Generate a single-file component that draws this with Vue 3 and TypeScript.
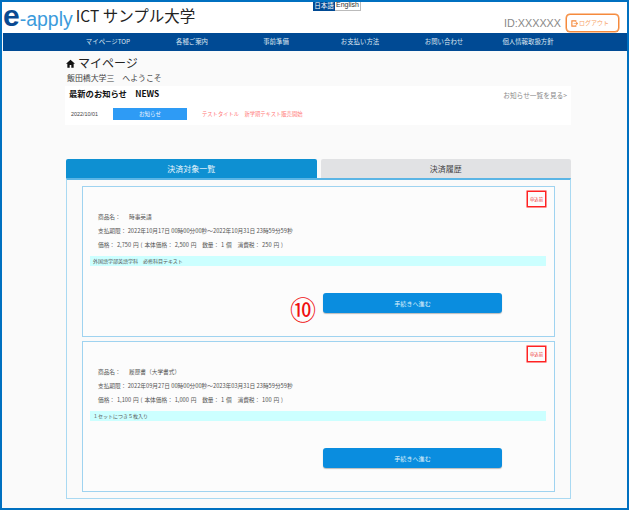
<script setup lang="ts">
interface Item {
  name: string
  period: string
  price: string
  note: string
  mark?: string
}
const navItems: string[] = ['マイページTOP', '各種ご案内', '事前準備', 'お支払い方法', 'お問い合わせ', '個人情報取扱方針']
const items: Item[] = [
  {
    name: '時事英語',
    period: '2022年10月17日 00時00分00秒～2022年10月31日 23時59分59秒',
    price: '2,750 円 ( 本体価格： 2,500 円　数量： 1 個　消費税： 250 円 )',
    note: '外国語学部英語学科　必修科目テキスト',
    mark: '⑩'
  },
  {
    name: '履歴書（大学書式）',
    period: '2022年09月27日 00時00分00秒～2023年03月31日 23時59分59秒',
    price: '1,100 円 ( 本体価格： 1,000 円　数量： 1 個　消費税： 100 円 )',
    note: '１セットにつき５枚入り'
  }
]
</script>

<template>
  <div class="frame">
    <header class="header">
      <div class="brand">
        <span class="logo"><span class="logo-e">e</span><span class="logo-rest">-apply</span></span>
        <span class="school">ICT サンプル大学</span>
      </div>
      <div class="lang">
        <span class="lang-ja">日本語</span>
        <span class="lang-en">English</span>
      </div>
      <div class="account">
        <span class="userid">ID:XXXXXX</span>
        <button class="logout">
          <svg width="7" height="7" viewBox="0 0 8 8">
            <path d="M5.5 2V1H1v6h4.5V6" fill="none" stroke="#f58a3c" stroke-width="1.3" />
            <path d="M3 4h3V2.6L8 4 6 5.4V4" fill="#f58a3c" stroke="#f58a3c" stroke-width=".6" />
          </svg>
          ログアウト
        </button>
      </div>
    </header>

    <nav class="nav">
      <div class="nav-inner">
        <a v-for="n in navItems" :key="n" class="nav-item">{{ n }}</a>
      </div>
    </nav>

    <main class="content">
      <h1 class="title">
        <svg width="9" height="9" viewBox="0 0 10 10">
          <path d="M5 .8 0 5.4h1.5V9.6h2.6V6.6h1.8v3h2.6V5.4H10Z" fill="#111" />
        </svg>
        マイページ
      </h1>
      <p class="welcome">飯田橋大学三　へようこそ</p>

      <section class="news">
        <div class="news-head">
          <h2>最新のお知らせ　NEWS</h2>
          <a class="news-more">お知らせ一覧を見る&gt;</a>
        </div>
        <div class="news-row">
          <span class="news-date">2022/10/01</span>
          <span class="news-tag">お知らせ</span>
          <span class="news-text">テストタイトル　新学期テキスト販売開始</span>
        </div>
      </section>

      <div class="tabs">
        <div class="tab active">決済対象一覧</div>
        <div class="tab">決済履歴</div>
      </div>

      <section class="panel">
        <article v-for="it in items" :key="it.name" class="card">
          <span class="badge">申込前</span>
          <p class="line"><span class="label">商品名：</span>{{ it.name }}</p>
          <p class="line">支払期限：&nbsp;{{ it.period }}</p>
          <p class="line price">価格：&nbsp;{{ it.price }}</p>
          <p class="note">{{ it.note }}</p>
          <div class="action">
            <span v-if="it.mark" class="mark">{{ it.mark }}</span>
            <button class="go">手続きへ進む</button>
          </div>
        </article>
      </section>
    </main>
  </div>
</template>

<style>
html, body { margin: 0; padding: 0; }
</style>

<style scoped>
.frame {
  box-sizing: border-box;
  width: 629px;
  height: 510px;
  overflow: hidden;
  border: 2px solid #0070c0;
  background: #fafafa;
  font-family: "Noto Sans CJK JP", "Liberation Sans", sans-serif;
  color: #333;
}
.header {
  position: relative;
  display: flex;
  justify-content: space-between;
  align-items: flex-start;
  height: 31px;
  background: #fff;
}
.brand {
  display: flex;
  align-items: flex-start;
  margin: 0 0 0 1px;
}
.logo {
  font-family: "Liberation Sans", sans-serif;
  line-height: 28px;
  white-space: nowrap;
}
.logo-e {
  color: #0a4a92;
  font-size: 30px;
  font-weight: 700;
}
.logo-rest {
  color: #3c9bdc;
  font-size: 19.5px;
}
.school {
  margin-left: 3px;
  font-size: 15.5px;
  line-height: 27px;
  color: #222;
  white-space: nowrap;
}
.lang {
  position: absolute;
  left: 311px;
  top: -2px;
  display: flex;
  line-height: 10px;
}
.lang-ja {
  width: 22px;
  background: #004a94;
  color: #fff;
  font-size: 6.5px;
  text-align: center;
}
.lang-en {
  width: 25px;
  background: #fff;
  color: #333;
  border-right: 1px solid #bbb;
  border-bottom: 1px solid #bbb;
  font-family: "Liberation Sans", sans-serif;
  font-size: 7px;
  text-align: center;
}
.account {
  display: flex;
  align-items: center;
  gap: 5px;
  margin: 12px 8px 0 0;
}
.userid {
  font-family: "Liberation Sans", sans-serif;
  font-size: 10.8px;
  color: #888;
}
.logout {
  display: flex;
  align-items: center;
  gap: 1px;
  box-sizing: border-box;
  width: 53px;
  height: 18px;
  padding: 0 0 0 4px;
  background: #fff;
  border: 1px solid #f58a3c;
  border-radius: 4px;
  box-shadow: 0 0 0 .5px #f58a3c;
  color: #f7a468;
  font-family: inherit;
  font-size: 6px;
  line-height: 1;
}
.nav {
  height: 18px;
  margin-left: 1px;
  background: #004a94;
}
.nav-inner {
  display: grid;
  grid-template-columns: repeat(6, 84px);
  width: 504px;
  margin-left: 63px;
}
.nav-item {
  color: #dde6f0;
  font-size: 6.4px;
  line-height: 18px;
  text-align: center;
  white-space: nowrap;
}
.content {
  width: 506px;
  margin-left: 63px;
}
.title {
  display: flex;
  align-items: center;
  gap: 3px;
  margin: 5px 0 0 1px;
  font-size: 12px;
  font-weight: 400;
  line-height: 14px;
  color: #222;
}
.welcome {
  margin: 2px 0 0 2px;
  font-size: 7.9px;
  line-height: 11px;
  color: #444;
}
.news {
  box-sizing: border-box;
  height: 39px;
  margin-top: 3px;
  padding: 0 4px;
  background: #fff;
}
.news-head {
  display: flex;
  justify-content: space-between;
  align-items: flex-start;
  height: 14px;
}
.news-head h2 {
  margin: 0;
  font-size: 8.3px;
  font-weight: 700;
  line-height: 14px;
  color: #111;
}
.news-more {
  margin-top: 3px;
  font-size: 6.7px;
  line-height: 12px;
  color: #888;
}
.news-row {
  display: flex;
  align-items: center;
  margin-top: 8px;
}
.news-date {
  width: 42px;
  margin-left: 2px;
  font-size: 5.4px;
  font-family: "Liberation Sans", sans-serif;
  color: #444;
}
.news-tag {
  width: 74px;
  height: 12px;
  background: #2e9bf5;
  color: #f2f8ff;
  font-size: 5.5px;
  line-height: 12px;
  text-align: center;
}
.news-text {
  margin-left: 15px;
  font-size: 5.3px;
  color: #f77;
}
.tabs {
  display: flex;
  gap: 4px;
  margin: 34px 0 0 1px;
  width: 505px;
}
.tab {
  flex: 1;
  height: 19px;
  border-radius: 2px 2px 0 0;
  background: #e1e2e4;
  color: #444;
  font-size: 8px;
  line-height: 19px;
  text-align: center;
}
.tab.active {
  background: #0e90d2;
  color: #e8f5fc;
}
.panel {
  box-sizing: border-box;
  display: flex;
  flex-direction: column;
  gap: 4px;
  width: 505px;
  height: 321px;
  margin-left: 1px;
  padding: 6px 15px 0;
  border: 1px solid #a9d9f2;
  border-top: 2px solid #5bb5e5;
}
.card {
  position: relative;
  box-sizing: border-box;
  height: 151px;
  padding: 23px 8px 0 7px;
  border: 1px solid #9fd3f0;
  background: #fcfcfc;
}
.badge {
  position: absolute;
  top: 4px;
  right: 8px;
  box-sizing: border-box;
  width: 19px;
  height: 16px;
  border: 1px solid #f22;
  box-shadow: 0 0 0 .5px #f22;
  color: #e33;
  font-size: 4.3px;
  line-height: 14px;
  text-align: center;
  white-space: nowrap;
}
.line {
  margin: 0 0 0 8px;
  font-size: 5.7px;
  line-height: 14px;
  color: #555;
  white-space: nowrap;
}
.label {
  display: inline-block;
  width: 31px;
}
.price {
  word-spacing: .6px;
}
.note {
  height: 10px;
  margin: 4px 0 0;
  padding-left: 3px;
  background: #ccffff;
  font-size: 5px;
  line-height: 10px;
  color: #555;
}
.action {
  display: flex;
  justify-content: flex-end;
  align-items: center;
  margin-top: 27px;
  padding-right: 44px;
}
.go {
  width: 179px;
  height: 20px;
  padding: 0;
  border: 0;
  border-radius: 3px;
  background: #0a8ddf;
  box-shadow: 0 1px 1px #bbb;
  color: #dff1fb;
  font-family: inherit;
  font-size: 6.1px;
}
.mark {
  position: absolute;
  left: 207px;
  top: 106px;
  width: 26px;
  color: #f01010;
  font-size: 26px;
  line-height: 32px;
  text-align: center;
}
</style>
